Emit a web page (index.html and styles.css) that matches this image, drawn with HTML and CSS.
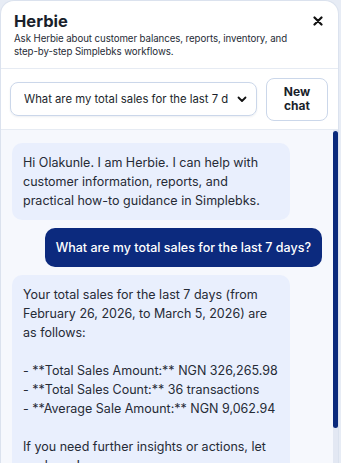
FILE: index.html
```html
<!DOCTYPE html>
<html>
<head>
<meta charset="utf-8">
<link rel="stylesheet" href="styles.css">
</head>
<body>
<div class="panel">
  <header class="header">
    <div class="head-text">
      <h1 class="title">Herbie</h1>
      <p class="subtitle">Ask Herbie about customer balances, reports, inventory, and step-by-step Simplebks workflows.</p>
    </div>
    <button class="close" aria-label="Close">
      <svg width="10" height="10" viewBox="0 0 10 10"><path d="M1.5 1.5L8.5 8.5M8.5 1.5L1.5 8.5" stroke="#111" stroke-width="2.2" stroke-linecap="round"/></svg>
    </button>
  </header>
  <div class="toolbar">
    <div class="select">
      <span class="select-text">What are my total sales for the last 7 d</span>
      <svg class="chev" width="10" height="7" viewBox="0 0 10 7"><path d="M1.5 1.5L5 5L8.5 1.5" fill="none" stroke="#111" stroke-width="1.8" stroke-linecap="round" stroke-linejoin="round"/></svg>
    </div>
    <button class="new-chat">New<br>chat</button>
  </div>
  <div class="chat">
    <div class="messages">
      <div class="msg bot">Hi Olakunle. I am Herbie. I can help with customer information, reports, and practical how-to guidance in Simplebks.</div>
      <div class="msg user">What are my total sales for the last 7 days?</div>
      <div class="msg bot">Your total sales for the last 7 days (from February 26, 2026, to March 5, 2026) are as follows:

- **Total Sales Amount:** NGN 326,265.98
- **Total Sales Count:** 36 transactions
- **Average Sale Amount:** NGN 9,062.94

If you need further insights or actions, let me know!</div>
    </div>
    <div class="scrollbar"><div class="thumb"></div></div>
  </div>
</div>
</body>
</html>
```
FILE: styles.css
```css
html, body {
  margin: 0;
  padding: 0;
  height: 100%;
  overflow: hidden;
}
body {
  background: #e7ecf5;
  font-family: Inter, "Noto Sans", sans-serif;
  color: #1f2430;
}
.panel {
  width: 339px;
  height: 463px;
  background: #ffffff;
  border: 1px solid #dbe2ee;
  border-bottom: none;
  border-radius: 14px 14px 0 0;
  display: flex;
  flex-direction: column;
  overflow: hidden;
  box-sizing: border-box;
}
.header {
  display: flex;
  justify-content: space-between;
  align-items: flex-start;
  padding: 10px 14px 0 13px;
  height: 68px;
  box-sizing: border-box;
  border-bottom: 1px solid #e6ebf3;
  flex-shrink: 0;
}
.title {
  margin: 0;
  font-size: 16.5px;
  font-weight: 700;
  line-height: 20px;
  color: #1a1f2b;
}
.subtitle {
  margin: 1px 0 0;
  font-size: 9.7px;
  line-height: 13px;
  letter-spacing: -0.08px;
  color: #262b36;
  width: 296px;
}
.close {
  border: none;
  background: none;
  padding: 0;
  margin-top: 4px;
  width: 12px;
  height: 12px;
  flex-shrink: 0;
  display: flex;
  align-items: center;
  justify-content: center;
}
.toolbar {
  display: flex;
  align-items: center;
  gap: 9px;
  padding: 0 10px 0 9px;
  height: 60px;
  border-bottom: 1px solid #e6ebf3;
  flex-shrink: 0;
}
.select {
  flex: 1;
  height: 34px;
  border: 1px solid #cbd7ea;
  border-radius: 8px;
  display: flex;
  align-items: center;
  justify-content: space-between;
  padding: 0 9px 0 13px;
  box-sizing: border-box;
  box-shadow: 0 1px 2px rgba(30, 50, 90, 0.08);
  min-width: 0;
}
.select-text {
  font-size: 11.3px;
  color: #1a1f2b;
  white-space: nowrap;
  overflow: hidden;
}
.chev { flex-shrink: 0; }
.new-chat {
  flex-shrink: 0;
  width: 62px;
  height: 43px;
  border: 1px solid #cbd7ea;
  border-radius: 8px;
  background: #fff;
  font-family: inherit;
  font-size: 12px;
  font-weight: 700;
  line-height: 14px;
  color: #1a1f2b;
  padding: 0;
}
.chat {
  flex: 1;
  min-height: 0;
  background: #f6f8fd;
  display: flex;
  overflow: hidden;
}
.messages {
  flex: 1;
  min-width: 0;
  padding: 13px 11px 16px 11px;
  display: flex;
  flex-direction: column;
  gap: 8px;
  overflow: hidden;
}
.scrollbar {
  width: 5px;
  flex-shrink: 0;
  background: #e3e8f3;
  padding-top: 1px;
}
.thumb {
  height: 297px;
  background: #0b2a7c;
  border-radius: 3px;
}
.msg {
  font-size: 12.5px;
  line-height: 19px;
  padding: 10px 11px;
  border-radius: 10px;
  white-space: pre-line;
}
.bot {
  align-self: flex-start;
  width: 278px;
  box-sizing: border-box;
  background: #e9effd;
  color: #262b36;
}
.user {
  align-self: flex-end;
  background: #0c2a7e;
  color: #ffffff;
  font-weight: 500;
}
```
